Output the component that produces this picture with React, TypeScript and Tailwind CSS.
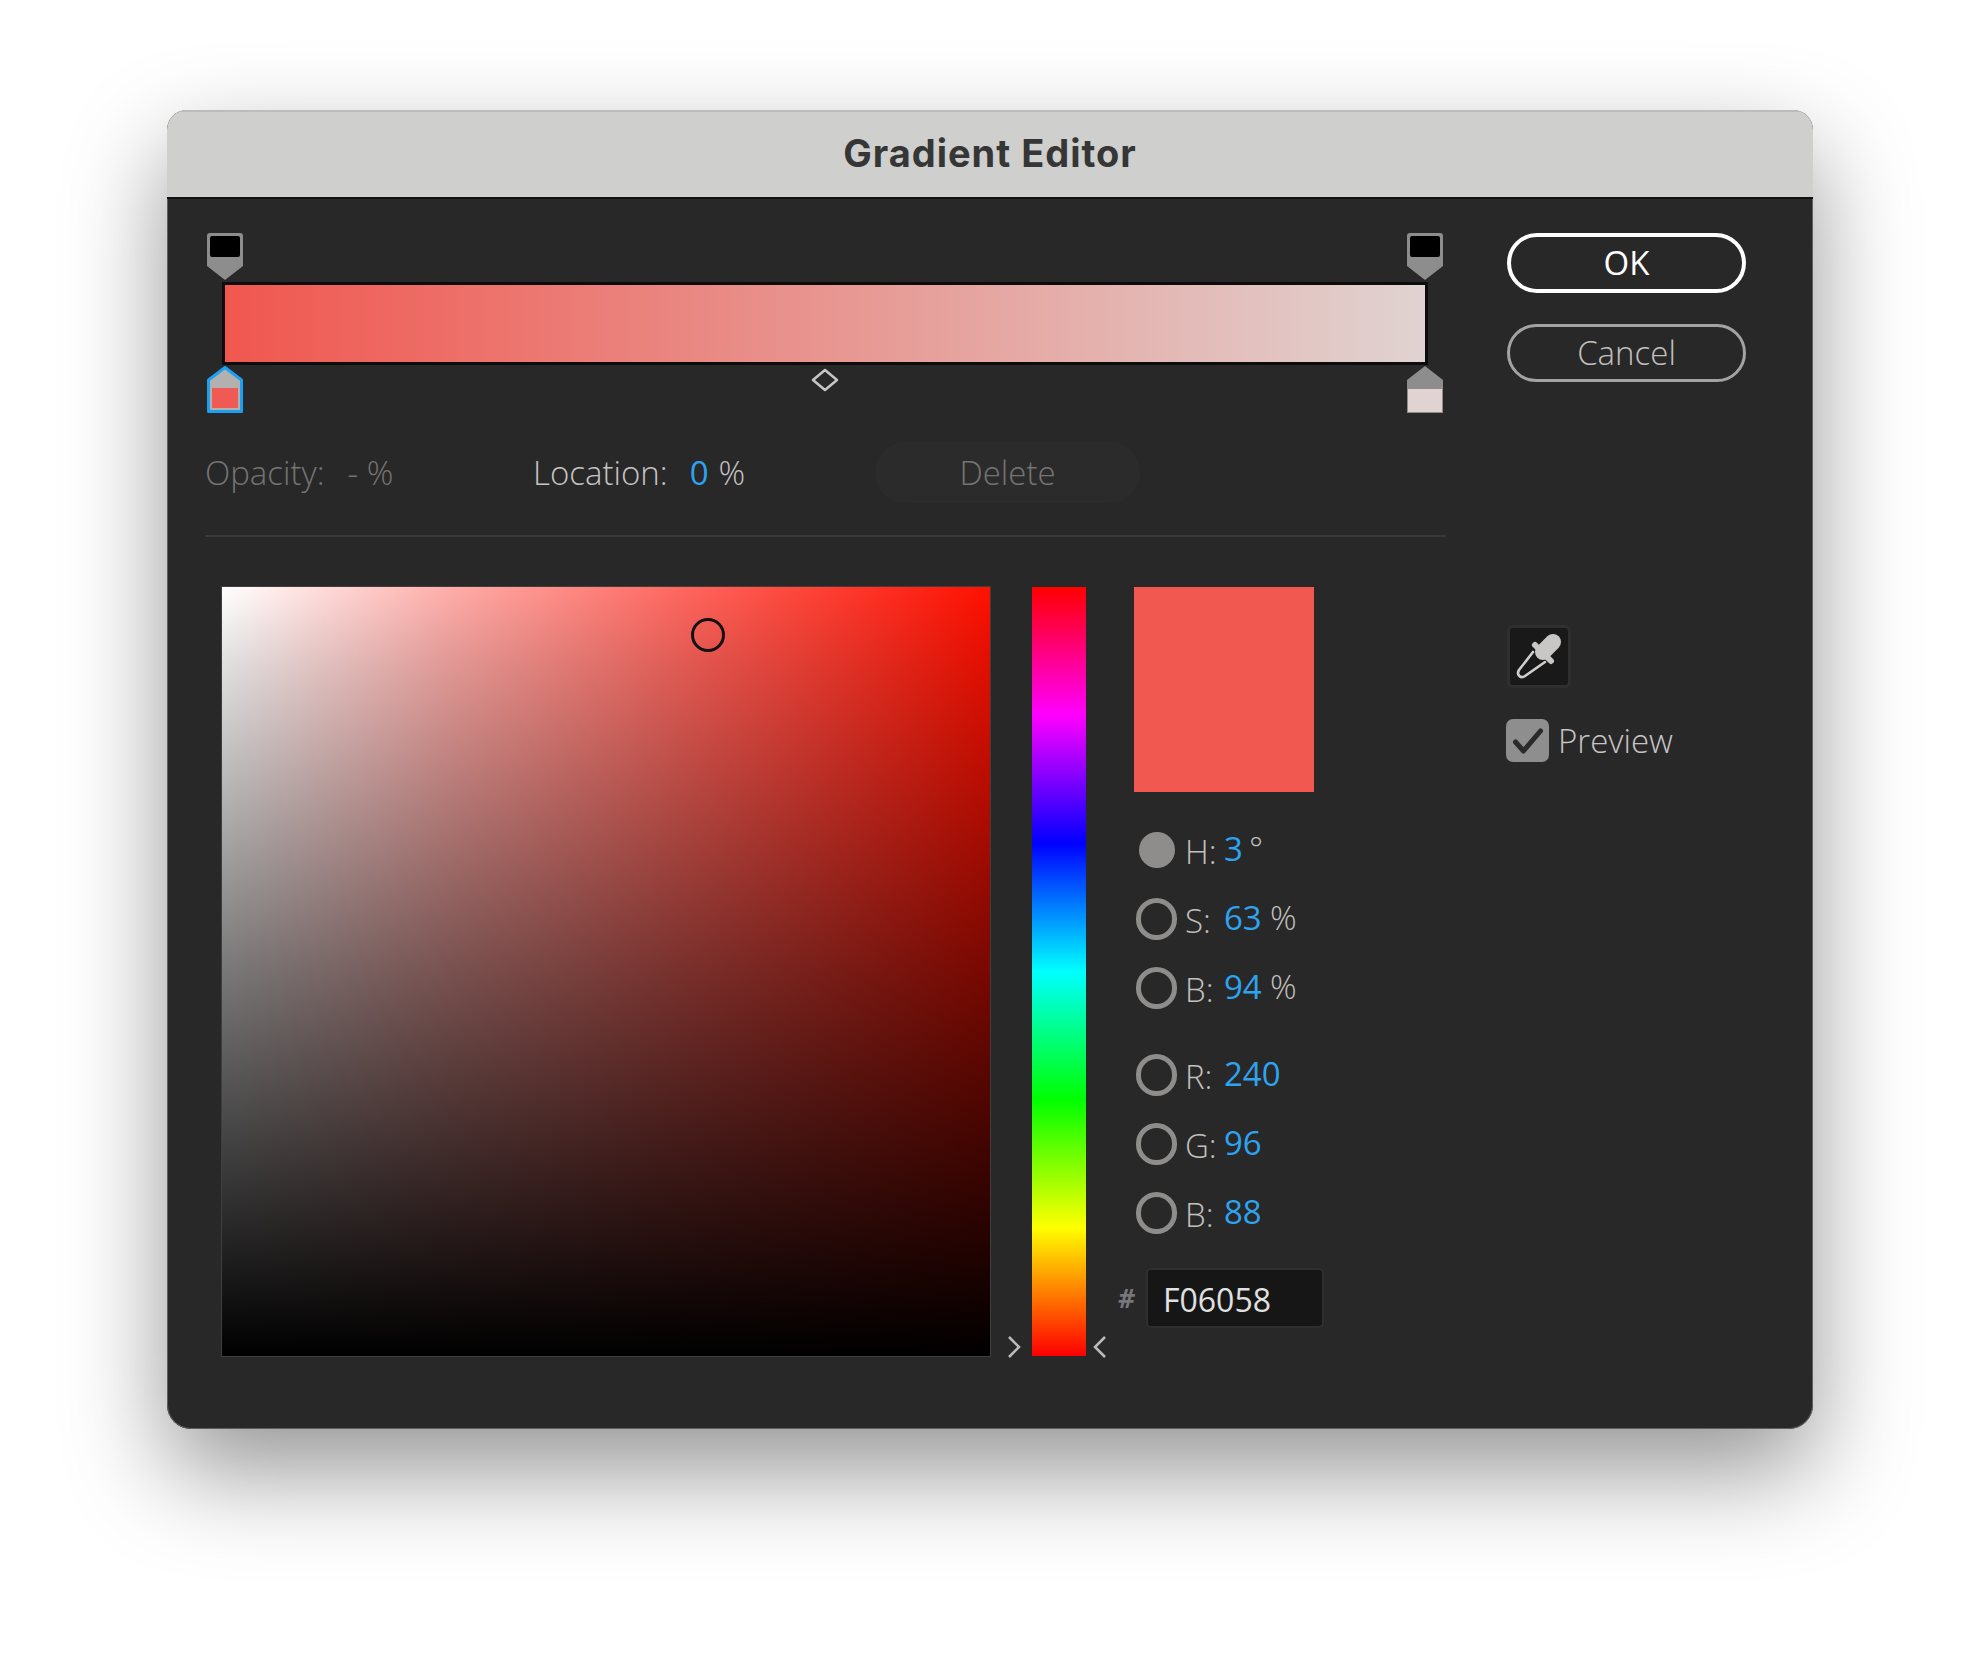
import React from "react";

const Check = () => (
  <svg viewBox="0 0 42 43" className="w-[43px] h-[43px]">
    <path d="M9 23 L17 32 L34 12" fill="none" stroke="#2a2a2a" strokeWidth="5" strokeLinecap="round" strokeLinejoin="round" />
  </svg>
);

function TopStop() {
  return (
    <svg viewBox="0 0 36 47" className="w-[36px] h-[47px] block">
      <path d="M3 0H33a3 3 0 0 1 3 3V33L18 47 0 33V3a3 3 0 0 1 3-3Z" fill="#8e8d8d" />
      <rect x="3" y="3" width="30" height="21" rx="2" fill="#000" />
    </svg>
  );
}

function BottomStop({ selected, color }: { selected?: boolean; color: string }) {
  if (selected) {
    return (
      <svg viewBox="0 0 36 47" className="w-[36px] h-[47px] block">
        <path d="M18 1.5 34.5 14V45.5H1.5V14Z" fill="#b3b1b0" stroke="#1ea0f2" strokeWidth="3" strokeLinejoin="round" />
        <rect x="5" y="22" width="26" height="20" fill={color} />
      </svg>
    );
  }
  return (
    <svg viewBox="0 0 36 47" className="w-[36px] h-[47px] block">
      <path d="M18 0 36 14V47H0V14Z" fill="#8e8d8d" />
      <rect x="1" y="23" width="34" height="23" fill={color} />
    </svg>
  );
}

function Channel({ label, value, unit, filled, narrow }: { label: string; value: string; unit?: string; filled?: boolean; narrow?: boolean }) {
  return (
    <div className="flex items-center h-[42px] whitespace-nowrap">
      <div className="w-[41px] h-[42px] flex items-center justify-center shrink-0">
        {filled ? (
          <div className="w-[36px] h-[36px] rounded-full bg-[#8e8d8c]" />
        ) : (
          <div className="w-[41px] h-[42px] rounded-full border-[5px] border-[#8e8d8c]" />
        )}
      </div>
      <div className="w-[47px] pl-[8px] mt-[4px] text-[#c2c0bf]">{label}</div>
      <div className={`text-[#2ea3f0] font-normal -mt-[2px] ${narrow ? "w-[25px]" : "w-[46px]"}`}>{value}</div>
      {unit ? <div className="text-[#c2c0bf] -mt-[2px]">{unit}</div> : null}
    </div>
  );
}

export default function App() {
  return (
    <div className="w-[1980px] h-[1653px] bg-white pt-[110px] pl-[167px] overflow-hidden [font-family:'Open_Sans',sans-serif] text-[33px] font-[350]">
      <div className="w-[1646px] h-[1319px] rounded-t-[20px] rounded-b-[24px] bg-[#282828] shadow-[0_42px_100px_rgba(0,0,0,0.42)] overflow-hidden flex flex-col">
        <div className="h-[89px] bg-[#cfcfcd] border-t-[2px] border-t-[#bcbcbc] border-b-[2px] border-b-[#111] flex items-center justify-center shrink-0">
          <span className="text-[#363636] font-bold text-[38px] tracking-[1px] -mt-[2px] [font-family:Inter,sans-serif]">Gradient Editor</span>
        </div>
        <div className="flex-1 flex pt-[34px] pl-[37px] border-x-[1px] border-b-[1px] border-[#5f5f5f] rounded-b-[24px]">
          <div className="w-[1241px] shrink-0">
            <div className="flex justify-between pl-[2px] pr-[3px]">
              <TopStop />
              <TopStop />
            </div>
            <div className="mt-[2px] ml-[17px] mr-[18px] h-[83px] border-[3px] border-[#0c0c0c] bg-[linear-gradient(to_right,#f0574f,#e0d3d1)]" />
            <div className="mt-[1px] flex justify-between pl-[2px] pr-[3px]">
              <BottomStop selected color="#f05a54" />
              <svg viewBox="0 0 28 24" className="w-[28px] h-[24px] mt-[2px]">
                <path d="M14 2 26 12 14 22 2 12Z" fill="none" stroke="#c9c7c6" strokeWidth="2.5" strokeLinejoin="round" />
              </svg>
              <BottomStop color="#e0d3d1" />
            </div>
            <div className="mt-[29px] h-[61px] flex items-center">
              <div className="w-[328px] text-[#757473] whitespace-nowrap">
                <span>Opacity:</span>
                <span className="ml-[23px]">- %</span>
              </div>
              <div className="w-[342px] text-[#c6c4c3] whitespace-nowrap">
                <span>Location:</span>
                <span className="ml-[22px] text-[#2ea3f0] font-normal">0</span>
                <span className="ml-[10px]">%</span>
              </div>
              <div className="w-[265px] h-[61px] rounded-[30px] bg-[#2b2b2b] flex items-center justify-center text-[#757473]">Delete</div>
            </div>
            <div className="mt-[32px] h-[2px] bg-[#3a3a3a]" />
            <div className="mt-[50px] flex pl-[17px]">
              <div className="relative w-[768px] h-[769px] bg-[linear-gradient(to_top,#000_0%,rgba(0,0,0,0.53)_50%,rgba(0,0,0,0.12)_90%,transparent_100%),linear-gradient(to_right,#fff_0%,#ffacA8_30%,#ff665e_60%,#ff1000_100%)] shadow-[0_0_0_1px_#3e3e3e]">
                <div className="absolute left-[469px] top-[31px] w-[34px] h-[34px] rounded-full border-[3px] border-[#111]" />
              </div>
              <div className="w-[42px] flex items-end justify-center">
                <svg viewBox="0 0 14 24" className="w-[14px] h-[24px] -mb-[3px] ml-[6px]">
                  <path d="M2 2 12 12 2 22" fill="none" stroke="#bdbbba" strokeWidth="2.5" />
                </svg>
              </div>
              <div className="w-[54px] h-[769px] bg-[linear-gradient(to_bottom,#f00_0%,#f0f_16.67%,#00f_33.33%,#0ff_50%,#0f0_66.67%,#ff0_83.33%,#f00_100%)]" />
              <div className="w-[48px] flex items-end pl-[7px]">
                <svg viewBox="0 0 14 24" className="w-[14px] h-[24px] -mb-[3px]">
                  <path d="M12 2 2 12 12 22" fill="none" stroke="#bdbbba" strokeWidth="2.5" />
                </svg>
              </div>
              <div>
                <div className="w-[180px] h-[205px] bg-[#f05850]" />
                <div className="mt-[37px] flex flex-col gap-[27px] ml-[2px]">
                  <Channel label="H:" value="3" unit="°" filled narrow />
                  <Channel label="S:" value="63" unit="%" />
                  <Channel label="B:" value="94" unit="%" />
                </div>
                <div className="mt-[45px] flex flex-col gap-[27px] ml-[2px]">
                  <Channel label="R:" value="240" />
                  <Channel label="G:" value="96" />
                  <Channel label="B:" value="88" />
                </div>
                <div className="mt-[34px] flex items-center -ml-[16px]">
                  <span className="w-[28px] text-[#77767a] text-[26px] font-bold italic">#</span>
                  <div className="w-[178px] h-[60px] rounded-[5px] bg-[#161616] border-[2px] border-[#2f2f2f] flex items-center pl-[15px] pt-[3px] text-[#e0e0e0] font-normal text-[32px]">F06058</div>
                </div>
              </div>
            </div>
          </div>
          <div className="ml-[61px] w-[239px] shrink-0">
            <div className="h-[60px] rounded-[30px] border-[4px] border-white flex items-center justify-center text-white font-normal">OK</div>
            <div className="mt-[31px] h-[58px] rounded-[29px] border-[3px] border-[#a5a3a2] flex items-center justify-center text-[#c2c0bf]">Cancel</div>
            <div className="mt-[243px] w-[64px] h-[63px] rounded-[6px] bg-[#191919] border-[3px] border-[#2f2f2f] flex items-center justify-center">
              <svg viewBox="0 0 58 57" className="w-[58px] h-[57px]">
                <path d="M23 24 9 42c-3 5 2 9 6 6L35 34" fill="none" stroke="#d2d0cf" strokeWidth="2.6" strokeLinejoin="round" strokeLinecap="round" />
                <path d="M43 14 33 24" fill="none" stroke="#c9c7c6" strokeWidth="16" strokeLinecap="round" />
                <path d="M25 17 41 33" fill="none" stroke="#c9c7c6" strokeWidth="6" strokeLinecap="round" />
              </svg>
            </div>
            <div className="mt-[31px] -ml-[1px] flex items-center h-[43px]">
              <div className="w-[43px] h-[43px] rounded-[7px] bg-[#8f8e8e]"><Check /></div>
              <span className="ml-[9px] text-[#c6c4c3]">Preview</span>
            </div>
          </div>
        </div>
      </div>
    </div>
  );
}
